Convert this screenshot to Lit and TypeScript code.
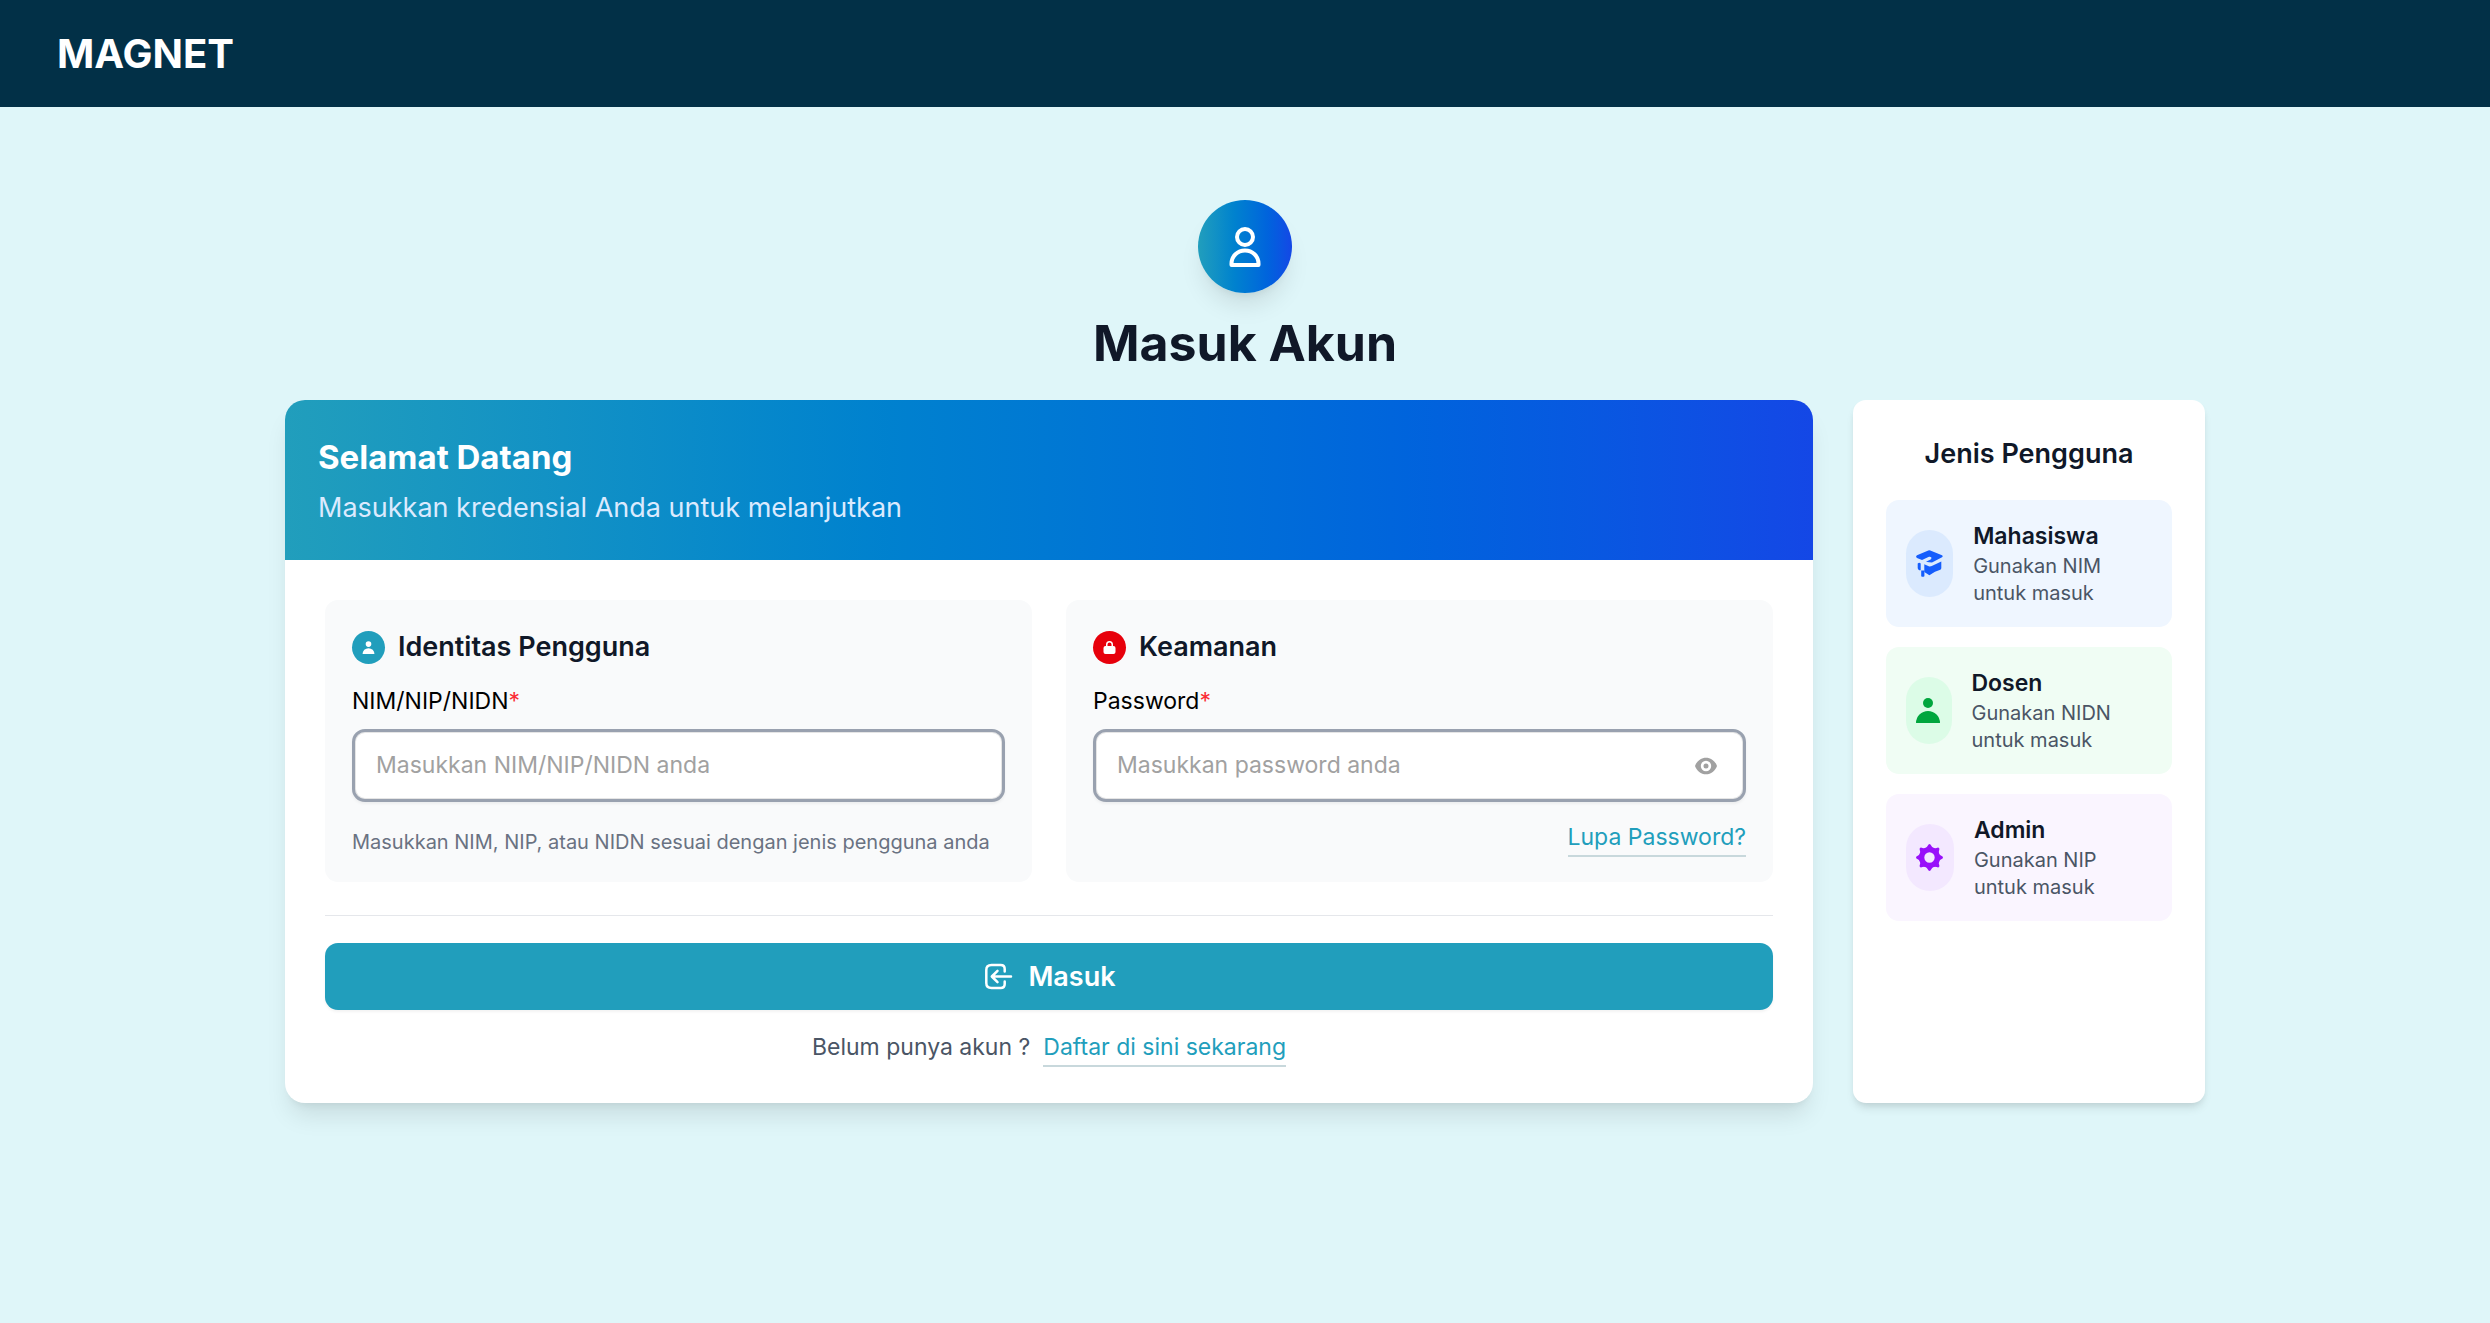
import { LitElement, html, svg, css } from "lit";
import { customElement, state } from "lit/decorators.js";

const userSolid = svg`<circle cx="12" cy="6.500" r="4.500"/><path d="M2.500 22.500a9.500 9.500 0 0 1 19 0z"/>`;

const capIcon = html`<svg class="glyph" viewBox="0 0 27 27" aria-hidden="true">
  <path d="M12.300.4q1-.5 2 0L26 5.200Q27.400 6.200 26 7.200L16 12.500q-3-.2-6-.8l4.600-2.200q1.300-1 .6-2.200-.8-.9-2.200-.5L6 10 1 8Q-.8 6.500 1 5.200Z"/>
  <path d="M8.300 14.300l5 2.300q2 0 3-.8L25.300 11.500v6.500q0 1.200-1 1.700l-5.300 2-5.600 3.600-5.100-3.300Z"/>
  <path d="M1.700 13.500q1.600-1.300 3 0V20.300H3.200Q1.700 19.500 1.700 18Z"/><path d="M5.200 20.500h3.200v5.700q-1.500 1.200-3.200 0Z"/>
</svg>`;

const dosenIcon = html`<svg class="glyph" viewBox="0 0 27 27" aria-hidden="true">
  <circle cx="13" cy="6" r="5"/><path d="M1 26a12 12 0 0 1 24 0Z"/>
</svg>`;

const gearIcon = html`<svg class="glyph" viewBox="-13.500 -13.500 27 27" aria-hidden="true">
  <circle r="7.900" fill="none" stroke="currentColor" stroke-width="5.400"/>
  ${[0, 45, 90, 135, 180, 225, 270, 315].map(
    (a) => svg`<path transform="rotate(${a})" d="M-4.500-9q2-1 2.700-2.800Q-1-13.500 0-13.500t1.800 1.700Q2.500-10 4.500-9Z"/>`
  )}
</svg>`;

const roles = [
  { name: "Mahasiswa", id: "NIM", tone: "blue", icon: capIcon },
  { name: "Dosen", id: "NIDN", tone: "green", icon: dosenIcon },
  { name: "Admin", id: "NIP", tone: "purple", icon: gearIcon },
];

@customElement("app-root")
export class AppRoot extends LitElement {
  static styles = css`
    :host {
      display: block;
      min-height: 100vh;
      background: #dff6f9;
      color: #101828;
      font-family: Inter, "Liberation Sans", sans-serif;
    }
    * { box-sizing: border-box; }
    h1, h2, h3, p { margin: 0; }
    a { text-decoration: none; }
    .topbar {
      display: flex;
      align-items: center;
      height: 107px;
      padding: 0 57px;
      background: #023047;
    }
    .brand { color: #fff; font-size: 40px; line-height: 53px; font-weight: 700; }
    .page { max-width: 2000px; margin: 0 auto; padding: 93px 40px 0; }
    .intro { display: flex; flex-direction: column; align-items: center; gap: 20px; margin-bottom: 27px; }
    .avatar {
      display: grid;
      place-items: center;
      width: 94px;
      height: 93px;
      border-radius: 50%;
      background: linear-gradient(to right in oklab, #219ebc, #1447e6);
      box-shadow: 0 17px 25px -5px rgb(0 0 0 / 0.1), 0 7px 10px -7px rgb(0 0 0 / 0.1);
    }
    .avatar svg { width: 40px; height: 40px; fill: none; stroke: #fff; stroke-width: 4; stroke-linejoin: round; }
    .title { font-size: 50px; line-height: 60px; font-weight: 700; }
    .columns { display: grid; grid-template-columns: repeat(5, minmax(0, 1fr)); gap: 40px; }
    .card {
      grid-column: span 4;
      overflow: hidden;
      border-radius: 20px;
      background: #fff;
      box-shadow: 0 17px 25px -5px rgb(0 0 0 / 0.1), 0 7px 10px -7px rgb(0 0 0 / 0.1);
    }
    .hero { padding: 34px 33px 32px; color: #fff; background: linear-gradient(to right in oklab, #219ebc, #1447e6); }
    .hero-title { margin-bottom: 7px; font-size: 33px; line-height: 47px; font-weight: 700; }
    .hero-text { color: #dbeafe; font-size: 27px; line-height: 40px; }
    .form { padding: 40px 40px 36px; }
    .panels { display: grid; grid-template-columns: 1fr 1fr; gap: 34px; }
    .panel { padding: 27px 27px 25px; border-radius: 13px; background: #f9fafb; }
    .panel-head { display: flex; align-items: center; gap: 13px; margin-bottom: 13px; }
    .panel-title { font-size: 27px; line-height: 40px; font-weight: 600; }
    .badge { display: grid; place-items: center; width: 33px; height: 33px; border-radius: 50%; background: #219ebc; }
    .badge.red { background: #e7000b; }
    .badge svg { width: 15px; height: 15px; fill: #fff; }
    .label { display: block; margin-bottom: 7px; color: #000; font-size: 23px; line-height: 42px; }
    .star { color: #fb2c36; }
    .field {
      display: flex;
      align-items: center;
      height: 73px;
      padding: 0 25px 0 21px;
      border: 3px solid #99a1af;
      border-radius: 13px;
      background: #fff;
      box-shadow: inset 0 0 0 1px #e5e5e5, 0 2px 3px rgb(0 0 0 / 0.05);
    }
    .input {
      flex: 1;
      min-width: 0;
      border: 0;
      padding: 0;
      outline: 0;
      background: transparent;
      color: #000;
      font: inherit;
      font-size: 23px;
      line-height: 33px;
    }
    .input::placeholder { color: #a1a1a1; opacity: 1; }
    .eye { display: grid; padding: 0; border: 0; background: none; cursor: pointer; }
    .eye svg { width: 24px; height: 24px; fill: #a1a1a1; }
    .hint { margin-top: 27px; color: #6a7282; font-size: 20px; line-height: 27px; }
    .forgot { display: flex; justify-content: flex-end; margin-top: 19px; }
    .link { padding-bottom: 1px; border-bottom: 2px solid #c8d8dc; color: #219ebc; font-size: 23px; line-height: 33px; }
    .actions { margin-top: 33px; padding-top: 27px; border-top: 1px solid #e5e7eb; }
    .submit {
      display: flex;
      align-items: center;
      justify-content: center;
      gap: 13px;
      width: 100%;
      height: 67px;
      border: 0;
      border-radius: 13px;
      background: #219ebc;
      color: #fff;
      font: inherit;
      font-size: 27px;
      font-weight: 600;
      box-shadow: 0 2px 3px rgb(0 0 0 / 0.05);
      cursor: pointer;
    }
    .submit svg { width: 33px; height: 33px; fill: none; stroke: #fff; stroke-width: 2.5; stroke-linecap: round; stroke-linejoin: round; }
    .register {
      display: flex;
      justify-content: center;
      gap: 13px;
      margin-top: 21px;
      color: #4a5565;
      font-size: 23px;
      line-height: 33px;
    }
    .aside {
      padding: 34px 33px;
      border-radius: 13px;
      background: #fff;
      box-shadow: 0 7px 10px -2px rgb(0 0 0 / 0.1), 0 3px 7px -3px rgb(0 0 0 / 0.1);
    }
    .aside-title { margin-bottom: 26px; text-align: center; font-size: 27px; line-height: 40px; font-weight: 600; }
    .roles { display: grid; gap: 20px; }
    .role { display: flex; align-items: center; gap: 20px; padding: 20px; border-radius: 13px; }
    .pill { display: grid; place-items: center; width: 67px; height: 67px; border-radius: 34px; }
    .glyph { width: 27px; height: 27px; fill: currentColor; }
    .role.blue { background: #eff6ff; }
    .blue .pill { background: #dbeafe; color: #155dfc; }
    .role.green { background: #f0fdf4; }
    .green .pill { background: #dcfce7; color: #00a63e; }
    .role.purple { background: #faf5ff; }
    .purple .pill { background: #f3e8ff; color: #9810fa; }
    .role-name { font-size: 23px; line-height: 33px; font-weight: 600; }
    .role-text { color: #4a5565; font-size: 20px; line-height: 27px; }
  `;

  @state() private reveal = false;

  render() {
    return html`
      <header class="topbar"><span class="brand">MAGNET</span></header>
      <main class="page">
        <div class="intro">
          <div class="avatar">
            <svg viewBox="0 0 40 40" aria-hidden="true">
              <circle cx="20" cy="10" r="8"/><path d="M6.500 38v-1.500a13.500 13 0 0 1 27 0V38Z"/>
            </svg>
          </div>
          <h1 class="title">Masuk Akun</h1>
        </div>
        <div class="columns">
          <section class="card">
            <div class="hero">
              <h2 class="hero-title">Selamat Datang</h2>
              <p class="hero-text">Masukkan kredensial Anda untuk melanjutkan</p>
            </div>
            <form class="form" @submit=${(e: Event) => e.preventDefault()}>
              <div class="panels">
                <div class="panel">
                  <div class="panel-head">
                    <span class="badge"><svg viewBox="0 0 24 24" aria-hidden="true">${userSolid}</svg></span>
                    <h3 class="panel-title">Identitas Pengguna</h3>
                  </div>
                  <label class="label" for="identity">NIM/NIP/NIDN<span class="star">*</span></label>
                  <div class="field">
                    <input class="input" id="identity" type="text" placeholder="Masukkan NIM/NIP/NIDN anda">
                  </div>
                  <p class="hint">Masukkan NIM, NIP, atau NIDN sesuai dengan jenis pengguna anda</p>
                </div>
                <div class="panel">
                  <div class="panel-head">
                    <span class="badge red">
                      <svg viewBox="-1 -1 15 15" aria-hidden="true">
                        <path fill-rule="evenodd" d="M3 5V3.500a3.500 3.500 0 0 1 7 0V5h.5a2 2 0 0 1 2 2v4a2 2 0 0 1-2 2h-8a2 2 0 0 1-2-2V7a2 2 0 0 1 2-2ZM4.500 5h4V3.500a2 2 0 0 0-4 0Z"/>
                      </svg>
                    </span>
                    <h3 class="panel-title">Keamanan</h3>
                  </div>
                  <label class="label" for="password">Password<span class="star">*</span></label>
                  <div class="field">
                    <input class="input" id="password" type=${this.reveal ? "text" : "password"} placeholder="Masukkan password anda">
                    <button class="eye" type="button" aria-label="Tampilkan password" @click=${() => (this.reveal = !this.reveal)}>
                      <svg viewBox="0 0 24 24" aria-hidden="true">
                        <path fill-rule="evenodd" d="M12 3.700c5 0 9.300 3.400 11 8.300-1.700 4.900-6 8.300-11 8.300S2.700 16.900 1 12c1.700-4.900 6-8.300 11-8.300ZM12 6.800a5.200 5.200 0 1 0 0 10.400 5.200 5.200 0 0 0 0-10.400Zm0 2.700a2.500 2.500 0 1 1 0 5 2.500 2.500 0 0 1 0-5Z"/>
                      </svg>
                    </button>
                  </div>
                  <div class="forgot"><a class="link" href="#lupa">Lupa Password?</a></div>
                </div>
              </div>
              <div class="actions">
                <button class="submit" type="submit">
                  <svg viewBox="0 0 33 33" aria-hidden="true">
                    <path d="M22.700 11.500V9q0-4-4-4H9.500Q4.300 5 4.300 10v13q0 5 5.200 5h9.200q4 0 4-4v-2.500"/><path d="M29 16.500H10M15.500 10.800l-5.700 5.700 5.700 5.700"/>
                  </svg>
                  Masuk
                </button>
                <p class="register"><span>Belum punya akun ?</span><a class="link" href="#daftar">Daftar di sini sekarang</a></p>
              </div>
            </form>
          </section>
          <aside class="aside">
            <h2 class="aside-title">Jenis Pengguna</h2>
            <div class="roles">
              ${roles.map(
                (r) => html`<div class="role ${r.tone}">
                  <span class="pill">${r.icon}</span>
                  <div>
                    <p class="role-name">${r.name}</p>
                    <p class="role-text">Gunakan ${r.id} untuk masuk</p>
                  </div>
                </div>`
              )}
            </div>
          </aside>
        </div>
      </main>
    `;
  }
}
